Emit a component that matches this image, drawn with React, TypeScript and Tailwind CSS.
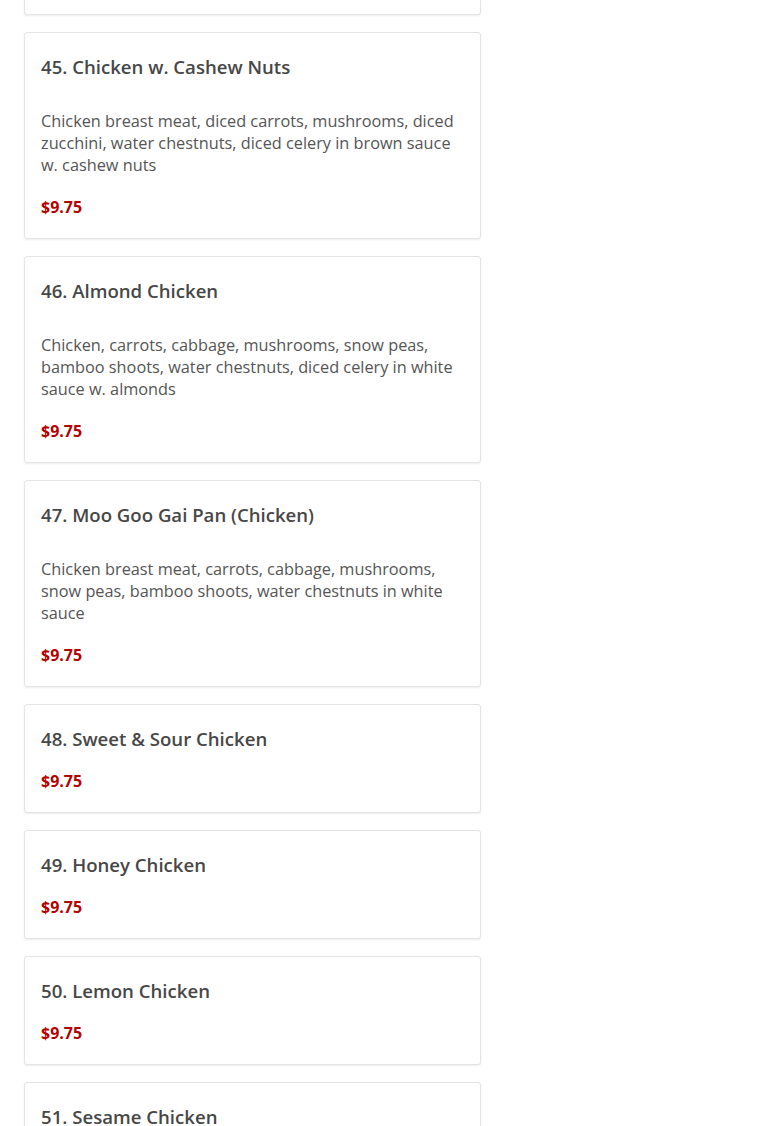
import React from 'react';

type MenuItem = {
    id: number;
    name: string;
    description?: string;
    price: string;
};

const items: MenuItem[] = [
    { id: 45, name: 'Chicken w. Cashew Nuts', description: 'Chicken breast meat, diced carrots, mushrooms, diced zucchini, water chestnuts, diced celery in brown sauce w. cashew nuts', price: '$9.75' },
    { id: 46, name: 'Almond Chicken', description: 'Chicken, carrots, cabbage, mushrooms, snow peas, bamboo shoots, water chestnuts, diced celery in white sauce w. almonds', price: '$9.75' },
    { id: 47, name: 'Moo Goo Gai Pan (Chicken)', description: 'Chicken breast meat, carrots, cabbage, mushrooms, snow peas, bamboo shoots, water chestnuts in white sauce', price: '$9.75' },
    { id: 48, name: 'Sweet & Sour Chicken', price: '$9.75' },
    { id: 49, name: 'Honey Chicken', price: '$9.75' },
    { id: 50, name: 'Lemon Chicken', price: '$9.75' },
    { id: 51, name: 'Sesame Chicken', price: '$9.75' },
];

const cardClass = 'bg-white border border-[#e4e4e4] rounded-[3px] shadow-[0_1px_2px_rgba(0,0,0,0.07)]';

const MenuCard: React.FC<{ item: MenuItem }> = ({ item }) => (
    <div className={`${cardClass} px-4 pt-4 pb-5`}>
        <h3 className="text-[18.6px] leading-[36px] font-semibold text-[#474747]">
            {item.id}. {item.name}
        </h3>
        {item.description && (
            <p className="mt-[25px] mb-[20px] text-[16.3px] leading-[22px] text-[#555555]">{item.description}</p>
        )}
        <div className={`${item.description ? '' : 'mt-[13px]'} text-[16px] leading-[22px] font-bold text-[#b50000]`}>
            {item.price}
        </div>
    </div>
);

export default function App() {
    return (
        <div className="h-[1126px] bg-white font-['Open_Sans',_'Liberation_Sans',_sans-serif] overflow-hidden">
            <div className="ml-6 w-[457px] flex flex-col gap-[17px]">
                <div className={`${cardClass} h-[15px] border-t-0 rounded-t-none`} />
                {items.map(item => <MenuCard key={item.id} item={item} />)}
            </div>
        </div>
    );
}
